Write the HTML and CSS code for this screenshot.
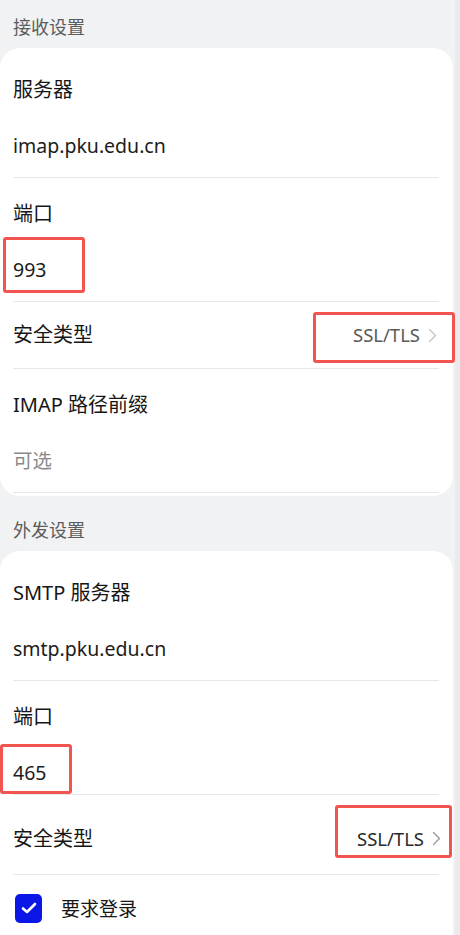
FILE: index.html
```html
<!DOCTYPE html>
<html lang="zh-CN">
<head>
<meta charset="utf-8">
<title>邮箱设置</title>
<link rel="stylesheet" href="styles.css">
</head>
<body>
<div class="page">
  <div class="section-title">接收设置</div>
  <div class="card card--first">
    <div class="field">
      <div class="label">服务器</div>
      <div class="value">imap.pku.edu.cn</div>
    </div>
    <div class="field">
      <div class="label">端口</div>
      <div class="value mark-wrap">993<span class="mark mark--port1"></span></div>
    </div>
    <div class="row">
      <div class="label">安全类型</div>
      <div class="select mark-wrap">
        <span class="select-text">SSL/TLS</span>
        <svg class="chev chev--light" width="9" height="15" viewBox="0 0 9 15"><polyline points="1.5,1.5 7.5,7.5 1.5,13.5" fill="none" stroke="currentColor" stroke-width="1.4" stroke-linecap="round" stroke-linejoin="round"/></svg>
        <span class="mark mark--sec1"></span>
      </div>
    </div>
    <div class="field">
      <div class="label">IMAP 路径前缀</div>
      <div class="value value--hint">可选</div>
    </div>
  </div>

  <div class="section-title section-title--next">外发设置</div>
  <div class="card card--second">
    <div class="field">
      <div class="label">SMTP 服务器</div>
      <div class="value">smtp.pku.edu.cn</div>
    </div>
    <div class="field field--tight">
      <div class="label">端口</div>
      <div class="value mark-wrap">465<span class="mark mark--port2"></span></div>
    </div>
    <div class="row row--tall">
      <div class="label">安全类型</div>
      <div class="select select--dark mark-wrap">
        <span class="select-text">SSL/TLS</span>
        <svg class="chev" width="9" height="15" viewBox="0 0 9 15"><polyline points="1.5,1.5 7.5,7.5 1.5,13.5" fill="none" stroke="currentColor" stroke-width="1.4" stroke-linecap="round" stroke-linejoin="round"/></svg>
        <span class="mark mark--sec2"></span>
      </div>
    </div>
    <div class="check-row">
      <span class="checkbox">
        <svg width="16" height="12" viewBox="0 0 16 12"><polyline points="2,6.5 6,10 14,2" fill="none" stroke="#fff" stroke-width="2.6" stroke-linecap="round" stroke-linejoin="round"/></svg>
      </span>
      <span class="check-label">要求登录</span>
    </div>
  </div>
</div>
</body>
</html>
```

FILE: styles.css
```css
html, body {
  margin: 0;
  padding: 0;
}
body {
  background: #f1f2f4;
  font-family: "Noto Sans", "Noto Sans CJK SC", sans-serif;
  color: #161616;
  width: 460px;
  height: 935px;
  overflow: hidden;
  position: relative;
}
body::after {
  content: "";
  position: absolute;
  top: 0;
  right: 0;
  width: 5px;
  height: 100%;
  background: #ebebed;
}
.page {
  display: flex;
  flex-direction: column;
}
.section-title {
  padding: 15px 0 9px 13px;
  font-size: 18px;
  line-height: 24px;
  color: #5c5c5c;
}
.section-title--next {
  padding-top: 22px;
}
.card {
  background: #fff;
  border-radius: 20px;
  width: 453px;
  box-sizing: border-box;
  padding: 6px 14px 3px 13px;
}
.card--second {
  padding-top: 6px;
  padding-bottom: 0;
  border-bottom-left-radius: 0;
  border-bottom-right-radius: 0;
  height: 400px;
}
.field {
  border-bottom: 1px solid #e7e7e9;
  padding: 22px 0 17px 0;
}
.field--tight {
  padding-bottom: 7px;
}
.label {
  font-size: 20px;
  line-height: 28px;
  color: #161616;
}
.value {
  margin-top: 28px;
  font-size: 19.5px;
  line-height: 28px;
  color: #1c1c1c;
}
.value--hint {
  color: #8a8a8a;
}
.mark-wrap {
  position: relative;
}
.mark {
  position: absolute;
  border: 3px solid #f25450;
  border-radius: 3px;
  box-sizing: border-box;
  pointer-events: none;
}
.mark--port1 {
  left: -10px;
  top: -19px;
  width: 82px;
  height: 56px;
}
.mark--port2 {
  left: -13px;
  top: -15px;
  width: 72px;
  height: 50px;
}
.row {
  display: flex;
  align-items: center;
  justify-content: space-between;
  height: 66px;
  border-bottom: 1px solid #e7e7e9;
}
.row--tall {
  height: 80px;
  padding-top: 8px;
  box-sizing: border-box;
}
.select {
  display: flex;
  align-items: center;
  gap: 8px;
  color: #5a5a5a;
  margin-right: 2px;
}
.select--dark {
  color: #2a2a2a;
  margin-right: -2px;
}
.select-text {
  font-size: 18.5px;
  line-height: 24px;
}
.chev {
  color: #9a9a9a;
}
.chev--light {
  color: #c4c4c4;
}
.mark--sec1 {
  right: -18px;
  top: -11px;
  width: 142px;
  height: 51px;
}
.mark--sec2 {
  right: -11px;
  top: -22px;
  width: 117px;
  height: 53px;
}
.check-row {
  display: flex;
  align-items: center;
  height: 66px;
  padding-left: 2px;
}
.checkbox {
  width: 27px;
  height: 29px;
  border-radius: 5px;
  background: #0a17e6;
  display: flex;
  align-items: center;
  justify-content: center;
}
.check-label {
  margin-left: 19px;
  font-size: 19px;
  color: #161616;
}
```
